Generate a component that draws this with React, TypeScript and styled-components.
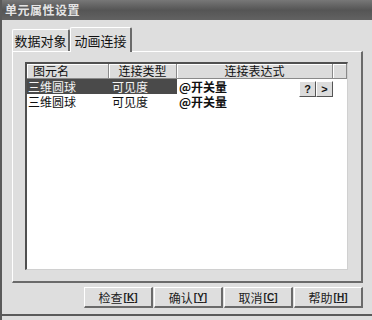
import styled, { createGlobalStyle } from 'styled-components'

const GlobalStyle = createGlobalStyle`
  html, body {
    margin: 0;
    padding: 0;
    background: #d8d8d8;
  }
  * {
    box-sizing: border-box;
  }
`

const FONT = `"Noto Sans CJK SC", "Noto Sans", sans-serif`

interface Column {
  title: string
  width: number
  align: 'left' | 'center'
}

const columns: Column[] = [
  { title: '图元名', width: 82, align: 'left' },
  { title: '连接类型', width: 68, align: 'center' },
  { title: '连接表达式', width: 156, align: 'center' },
  { title: '', width: 14, align: 'center' },
]

const rows = [
  { name: '三维圆球', type: '可见度', expr: '@开关量', selected: true },
  { name: '三维圆球', type: '可见度', expr: '@开关量', selected: false },
]

const buttons = [
  { label: '检查', key: 'K' },
  { label: '确认', key: 'Y' },
  { label: '取消', key: 'C' },
  { label: '帮助', key: 'H' },
]

export default function App() {
  return (
    <>
      <GlobalStyle />
      <Window>
        <TitleBar>单元属性设置</TitleBar>
        <Body>
          <Tabs>
            <Tab>数据对象</Tab>
            <Tab $active>动画连接</Tab>
          </Tabs>
          <Panel>
            <List>
              <HeaderRow>
                {columns.map((col, idx) => (
                  <HeaderCell key={idx} $width={col.width} $align={col.align}>
                    {col.title}
                  </HeaderCell>
                ))}
              </HeaderRow>
              {rows.map((row, idx) => (
                <Row key={idx}>
                  <Cell $width={82} $selected={row.selected} $pad={1}>
                    {row.name}
                  </Cell>
                  <Cell $width={68} $selected={row.selected} $pad={3}>
                    {row.type}
                  </Cell>
                  <ExprCell>
                    <Expr>{row.expr}</Expr>
                    {row.selected && (
                      <MiniButtons>
                        <MiniButton>?</MiniButton>
                        <MiniButton>&gt;</MiniButton>
                      </MiniButtons>
                    )}
                  </ExprCell>
                </Row>
              ))}
            </List>
          </Panel>
          <ButtonRow>
            {buttons.map((b) => (
              <DialogButton key={b.key}>
                {b.label}
                <Accel>
                  [<u>{b.key}</u>]
                </Accel>
              </DialogButton>
            ))}
          </ButtonRow>
        </Body>
      </Window>
    </>
  )
}

const Window = styled.div`
  width: 372px;
  height: 320px;
  display: flex;
  flex-direction: column;
  background: #dedede;
  font-family: ${FONT};
  border-left: 2px solid #5a5a5a;
`

const TitleBar = styled.div`
  height: 20px;
  flex: none;
  background: linear-gradient(to bottom, #777, #555 50%, #626262);
  color: #e4e4e4;
  font-size: 12px;
  font-weight: bold;
  line-height: 20px;
  padding-left: 3px;
  letter-spacing: 0.5px;
`

const Body = styled.div`
  flex: 1;
  display: flex;
  flex-direction: column;
  padding: 6px 9px 0 10px;
  border-bottom: 2px solid #5a5a5a;
  margin-bottom: 4px;
`

const Tabs = styled.div`
  display: flex;
  align-items: flex-end;
  height: 25px;
  position: relative;
  z-index: 1;
`

const Tab = styled.div<{ $active?: boolean }>`
  height: ${({ $active }) => ($active ? '25px' : '22px')};
  margin-bottom: ${({ $active }) => ($active ? '-1px' : '0')};
  width: ${({ $active }) => ($active ? '62px' : '58px')};
  display: flex;
  align-items: center;
  justify-content: center;
  white-space: nowrap;
  font-size: 13px;
  color: #111;
  background: #dedede;
  border-top: 1px solid #ffffff;
  border-left: 1px solid #ffffff;
  border-right: 2px solid #6a6a6a;
  border-radius: 2px 2px 0 0;
`

const Panel = styled.div`
  height: 232px;
  padding: 10px 13px 11px 12px;
  border-top: 1px solid #ffffff;
  border-left: 1px solid #ffffff;
  border-right: 2px solid #6a6a6a;
  border-bottom: 2px solid #6a6a6a;
`

const List = styled.div`
  height: 100%;
  background: #ffffff;
  border-top: 2px solid #505050;
  border-left: 2px solid #505050;
  border-right: 1px solid #d0d0d0;
  border-bottom: 1px solid #d0d0d0;
`

const HeaderRow = styled.div`
  display: flex;
  height: 15px;
`

const HeaderCell = styled.div<{ $width: number; $align: 'left' | 'center' }>`
  width: ${({ $width }) => $width}px;
  flex: none;
  background: #dcdcdc;
  border-right: 1px solid #8a8a8a;
  border-bottom: 1px solid #8a8a8a;
  box-shadow: inset 1px 1px 0 #ffffff;
  font-size: 12px;
  line-height: 14px;
  color: #111;
  text-align: ${({ $align }) => $align};
  padding-left: ${({ $align }) => ($align === 'left' ? '6px' : '0')};
  white-space: nowrap;
`

const Row = styled.div`
  display: flex;
  height: 15px;
`

const Cell = styled.div<{ $width: number; $selected: boolean; $pad: number }>`
  width: ${({ $width }) => $width}px;
  flex: none;
  background: ${({ $selected }) => ($selected ? '#4a4a4a' : 'transparent')};
  color: ${({ $selected }) => ($selected ? '#f4f4f4' : '#111')};
  font-size: 12px;
  line-height: 15px;
  padding-left: ${({ $pad }) => $pad}px;
  white-space: nowrap;
`

const ExprCell = styled.div`
  width: 156px;
  flex: none;
  display: flex;
  align-items: flex-start;
  justify-content: space-between;
  padding-left: 2px;
`

const Expr = styled.span`
  font-size: 12px;
  line-height: 15px;
  font-weight: bold;
  color: #111;
`

const MiniButtons = styled.div`
  display: flex;
  margin-top: 2px;
  position: relative;
  z-index: 1;
`

const MiniButton = styled.div`
  width: 17px;
  height: 16px;
  display: flex;
  align-items: center;
  justify-content: center;
  background: #dcdcdc;
  border-top: 1px solid #ffffff;
  border-left: 1px solid #ffffff;
  border-right: 1px solid #555;
  border-bottom: 1px solid #555;
  font-family: "Liberation Sans", Arial, sans-serif;
  font-weight: bold;
  font-size: 11px;
  color: #111;
`

const ButtonRow = styled.div`
  display: flex;
  justify-content: flex-end;
  gap: 1px;
  padding-top: 4px;
`

const DialogButton = styled.div`
  width: 69px;
  height: 21px;
  display: flex;
  align-items: center;
  justify-content: center;
  background: #dedede;
  border-top: 1px solid #ffffff;
  border-left: 1px solid #ffffff;
  border-right: 2px solid #6a6a6a;
  border-bottom: 2px solid #6a6a6a;
  font-size: 12px;
  color: #222;
`

const Accel = styled.span`
  font-family: "Liberation Sans", Arial, sans-serif;
  font-weight: bold;
  font-size: 10px;
  margin-left: 1px;
`
